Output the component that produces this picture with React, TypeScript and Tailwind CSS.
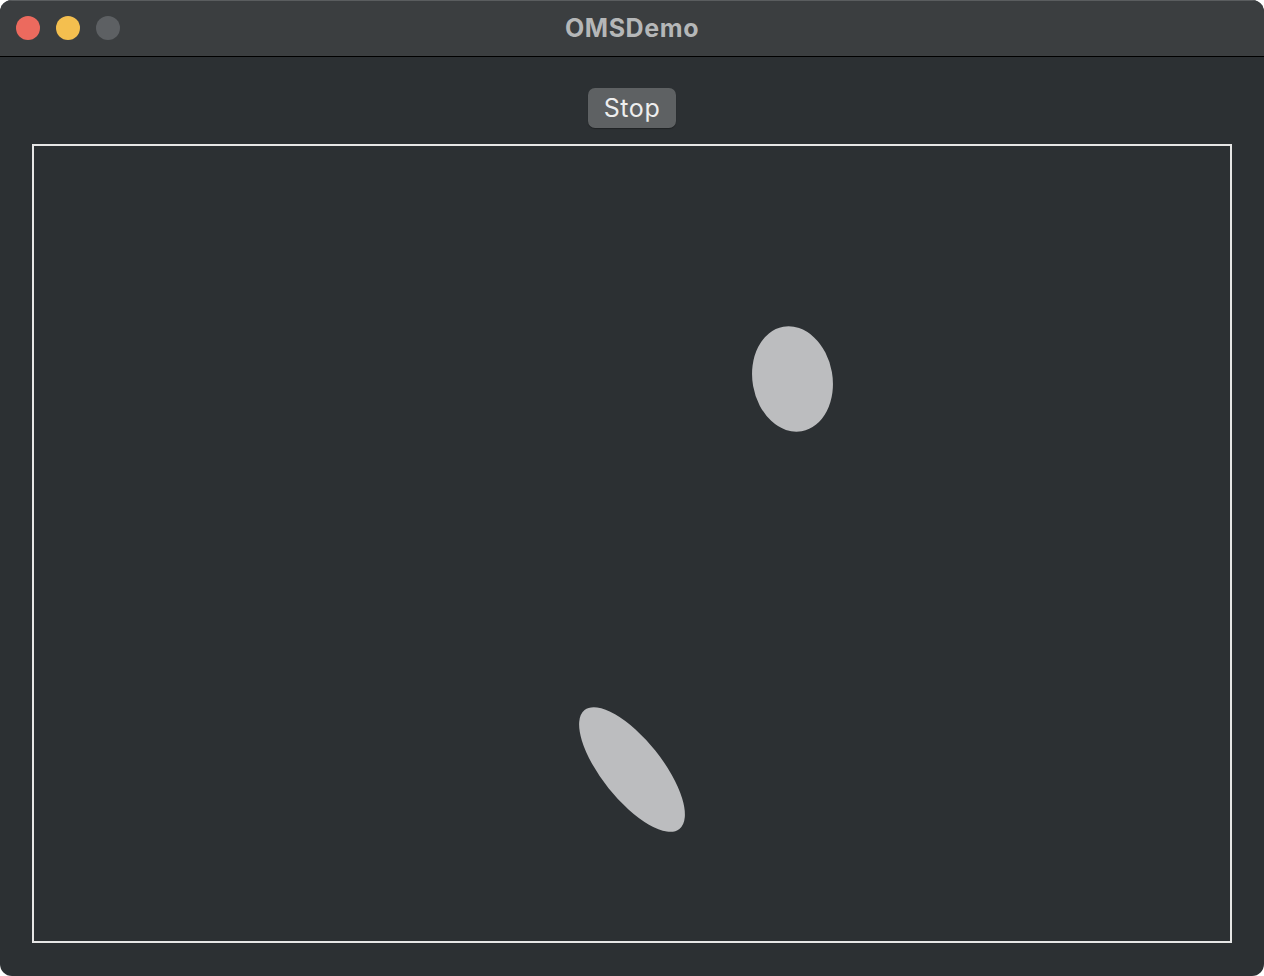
import React from "react";

export default function App() {
  return (
    <div className="w-[1264px] h-[976px] bg-white">
      <div
        className="w-full h-full rounded-[12px] overflow-hidden flex flex-col bg-[#2c3033]"
        style={{ fontFamily: "Inter, 'Noto Sans', sans-serif" }}
      >
        <div className="relative h-[57px] shrink-0 bg-[#3b3e40] border-t border-[#5a5d5f] border-b border-b-black flex items-center justify-center">
          <div className="absolute left-[16px] top-[15px] flex gap-[16px]">
            <div className="w-[24px] h-[24px] rounded-full bg-[#ec6a5e]" />
            <div className="w-[24px] h-[24px] rounded-full bg-[#f4bf4f]" />
            <div className="w-[24px] h-[24px] rounded-full bg-[#5d6063]" />
          </div>
          <span className="text-[25px] font-bold text-[#b5b7b8] tracking-[0.6px] leading-none">OMSDemo</span>
        </div>
        <div className="flex flex-col items-center pt-[31px]">
          <button className="w-[88px] h-[40px] rounded-[7px] bg-[#5e6163] text-[#eeeeee] text-[25px] tracking-[0.6px] leading-none flex items-center justify-center shadow-[0_1px_1px_rgba(0,0,0,0.3)]">
            Stop
          </button>
          <div className="mt-[16px] w-[1200px] h-[799px] border-2 border-[#e6e6e6]">
            <svg width="1196" height="795" viewBox="2 2 1196 795" className="block">
              <ellipse cx="760.5" cy="235" rx="40" ry="53" fill="#bcbdbf" transform="rotate(-10 760.5 235)" />
              <ellipse cx="600" cy="625.5" rx="30" ry="76" fill="#bcbdbf" transform="rotate(-38.6 600 625.5)" />
            </svg>
          </div>
        </div>
      </div>
    </div>
  );
}
